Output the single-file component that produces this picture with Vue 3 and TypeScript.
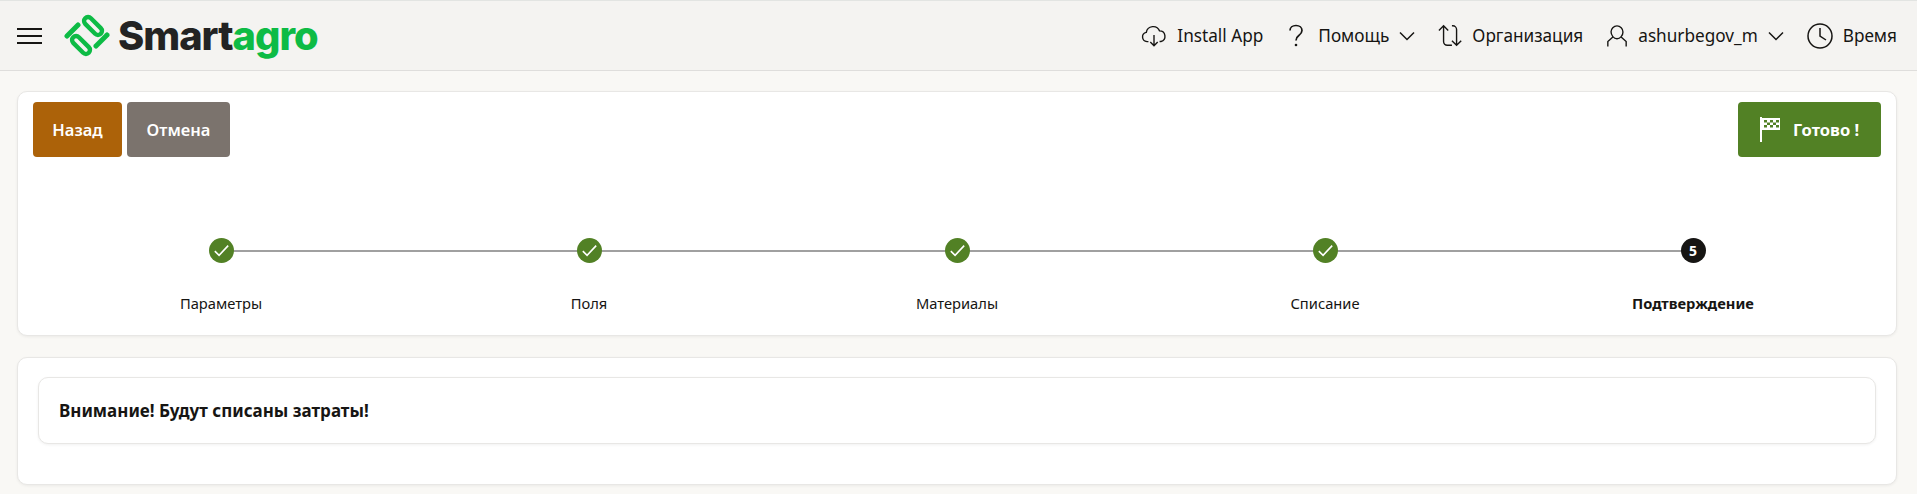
<script setup lang="ts">
interface Step {
  label: string
  done: boolean
}

const steps: Step[] = [
  { label: 'Параметры', done: true },
  { label: 'Поля', done: true },
  { label: 'Материалы', done: true },
  { label: 'Списание', done: true },
  { label: 'Подтверждение', done: false },
]
</script>

<template>
  <div class="page">
    <header class="topbar">
      <div class="brand">
        <button class="burger" aria-label="Меню">
          <span></span><span></span><span></span>
        </button>
        <svg class="logo-mark" viewBox="0 0 46 43" fill="none" stroke="#0dbb45" stroke-linecap="round">
          <path d="M3 22 14 11" stroke-width="5" />
          <path d="M32 32 43 21" stroke-width="5" />
          <rect x="18" y="8" width="22" height="8" rx="4" stroke-width="4.400" transform="rotate(45 29 12)" />
          <rect x="6" y="27" width="22" height="8" rx="4" stroke-width="4.400" transform="rotate(45 17 31)" />
        </svg>
        <span class="wordmark">Smart<em>agro</em></span>
      </div>

      <nav class="actions">
        <a class="action">
          <svg viewBox="0 0 28 28" class="icon"><path d="M8 20H6.500a5 5 0 0 1-.8-9.900A7.500 7.500 0 0 1 20 8.500a5.800 5.800 0 0 1 1.500 11.400H20M14 13v11M10 20.500l4 4 4-4" /></svg>
          Install App
        </a>
        <a class="action">
          <svg viewBox="0 0 16 24" class="help-icon"><path d="M2 6.500C2 3.500 4.500 1.500 8 1.500s6 2 6 5c0 2.500-1.500 3.700-3.200 5C9 12.800 8 14 8 16.500" /><circle cx="8" cy="21" r="1.300" /></svg>
          Помощь
          <svg viewBox="0 0 16 16" class="chevron"><path d="M1 4.500l7 7 7-7" /></svg>
        </a>
        <a class="action action--tight">
          <svg viewBox="0 0 28 28" class="icon"><path d="M1 8l5-5 5 5M6 3v17a4 4 0 0 0 4 4h5M15 3h1a4 4 0 0 1 4 4v17M15 19l5 5 5-5" /></svg>
          Организация
        </a>
        <a class="action">
          <svg viewBox="0 0 24 28" class="user-icon"><path d="M12 3a6.500 6.500 0 0 1 6.500 6.500c0 3.800-3 7.500-6.500 7.500s-6.500-3.700-6.500-7.500A6.500 6.500 0 0 1 12 3ZM7.500 15 2 20v5.500M16.500 15l5.500 5v5.500" /></svg>
          ashurbegov_m
          <svg viewBox="0 0 16 16" class="chevron"><path d="M1 4.500l7 7 7-7" /></svg>
        </a>
        <a class="action">
          <svg viewBox="0 0 26 26" class="icon"><circle cx="13" cy="13" r="12" /><path d="M13 5v8l6 4" /></svg>
          Время
        </a>
      </nav>
    </header>

    <main class="content">
      <section class="card wizard">
        <div class="toolbar">
          <div class="toolbar-left">
            <button class="btn btn--back">Назад</button>
            <button class="btn btn--cancel">Отмена</button>
          </div>
          <button class="btn btn--done">
            <svg viewBox="0 0 20 26" class="flag">
              <rect x="0" y="0" width="2" height="25" fill="#fff" />
              <rect x="2" y="1" width="18" height="12" fill="#fff" />
              <g fill="#528125">
                <rect x="4" y="3" width="3" height="2.500" />
                <rect x="10" y="3" width="3" height="2.500" />
                <rect x="16" y="3" width="3" height="2.500" />
                <rect x="7" y="5.500" width="3" height="2.500" />
                <rect x="13" y="5.500" width="3" height="2.500" />
                <rect x="4" y="8" width="3" height="2.500" />
                <rect x="10" y="8" width="3" height="2.500" />
                <rect x="16" y="8" width="3" height="2.500" />
              </g>
            </svg>
            Готово !
          </button>
        </div>

        <ol class="steps">
          <li v-for="(step, index) in steps" :key="step.label" class="step" :class="{ 'step--current': !step.done }">
            <span class="step-dot">
              <svg v-if="step.done" viewBox="0 0 14 14" class="check"><path d="M1.500 7.500 5 11l7.500-8" /></svg>
              <template v-else>{{ index + 1 }}</template>
            </span>
            <span class="step-label">{{ step.label }}</span>
          </li>
        </ol>
      </section>

      <section class="card notice-wrap">
        <div class="notice">Внимание! Будут списаны затраты!</div>
      </section>
    </main>
  </div>
</template>

<style>
body {
  background: #f9f8f5;
}
</style>

<style scoped>
.page {
  height: 494px;
  overflow: hidden;
  background: #f9f8f5;
  color: #161513;
  font-family: "Noto Sans", "Open Sans", sans-serif;
}

.topbar {
  height: 71px;
  box-sizing: border-box;
  display: flex;
  align-items: center;
  justify-content: space-between;
  padding: 0 20px 0 17px;
  background: #f4f3f1;
  border-top: 1px solid #e2e4e2;
  border-bottom: 1px solid #dfdedc;
}

.brand {
  display: flex;
  align-items: center;
}

.burger {
  display: flex;
  flex-direction: column;
  gap: 5px;
  width: 25px;
  padding: 0;
  border: 0;
  background: none;
}

.burger span {
  height: 2px;
  background: #161513;
}

.logo-mark {
  width: 46px;
  height: 43px;
  margin-left: 22px;
}

.wordmark {
  margin-left: 8px;
  font-family: Inter, sans-serif;
  font-size: 39.800px;
  font-weight: 800;
  letter-spacing: -1px;
  line-height: 1;
  color: #232323;
}

.wordmark em {
  font-style: normal;
  color: #0dbb45;
}

.actions {
  display: flex;
  align-items: center;
  gap: 23px;
  font-size: 17.200px;
}

.action {
  display: flex;
  align-items: center;
  gap: 10px;
  white-space: nowrap;
}

.action--tight {
  gap: 8px;
}

.icon {
  width: 26px;
  height: 26px;
  fill: none;
  stroke: #161513;
  stroke-width: 1.500;
}

.help-icon {
  width: 16px;
  height: 24px;
  margin: 0 4px 0 2px;
  fill: none;
  stroke: #161513;
  stroke-width: 1.700;
}

.help-icon circle {
  fill: #161513;
  stroke: none;
}

.user-icon {
  width: 22px;
  height: 26px;
  fill: none;
  stroke: #161513;
  stroke-width: 1.500;
}

.chevron {
  width: 16px;
  height: 16px;
  fill: none;
  stroke: #161513;
  stroke-width: 1.500;
}

.content {
  display: flex;
  flex-direction: column;
  gap: 21px;
  padding: 20px 20px 0 17px;
}

.card {
  background: #fff;
  border: 1px solid #e8e7e5;
  border-radius: 10px;
  box-shadow: 0 1px 3px rgba(0, 0, 0, 0.06);
}

.wizard {
  height: 245px;
  box-sizing: border-box;
  padding: 10px 15px 0;
}

.toolbar {
  display: flex;
  justify-content: space-between;
}

.toolbar-left {
  display: flex;
  gap: 5px;
}

.btn {
  height: 55px;
  border: 0;
  border-radius: 4px;
  color: #fff;
  font: 600 16.500px "Noto Sans", "Open Sans", sans-serif;
}

.btn--back {
  width: 89px;
  background: #ac6209;
}

.btn--cancel {
  width: 103px;
  background: #7b736d;
}

.btn--done {
  width: 143px;
  display: flex;
  align-items: center;
  justify-content: center;
  gap: 13px;
  background: #528125;
  font-weight: 700;
}

.flag {
  width: 20px;
  height: 26px;
}

.steps {
  display: grid;
  grid-template-columns: repeat(5, 368px);
  margin: 81px 0 0 4px;
  padding: 0;
  list-style: none;
}

.step {
  position: relative;
  display: flex;
  flex-direction: column;
  align-items: center;
  gap: 30px;
  font-size: 14.700px;
}

.step:not(:last-child)::after {
  content: "";
  position: absolute;
  top: 12px;
  left: 50%;
  width: 100%;
  height: 2px;
  background: #a0a0a0;
}

.step-dot {
  position: relative;
  z-index: 1;
  display: flex;
  align-items: center;
  justify-content: center;
  width: 25px;
  height: 25px;
  border-radius: 50%;
  background: #528125;
  color: #fff;
  font-size: 14px;
  font-weight: 700;
}

.step--current .step-dot {
  background: #161513;
}

.step--current .step-label {
  font-weight: 700;
}

.check {
  width: 17px;
  height: 17px;
  fill: none;
  stroke: #fff;
  stroke-width: 1.300;
}

.notice-wrap {
  height: 128px;
  box-sizing: border-box;
  padding: 19px 20px 0;
}

.notice {
  height: 67px;
  box-sizing: border-box;
  display: flex;
  align-items: center;
  padding-left: 20px;
  background: #fff;
  border: 1px solid #e8e7e5;
  border-radius: 10px;
  box-shadow: 0 1px 3px rgba(0, 0, 0, 0.06);
  font-size: 17px;
  font-weight: 700;
}
</style>
